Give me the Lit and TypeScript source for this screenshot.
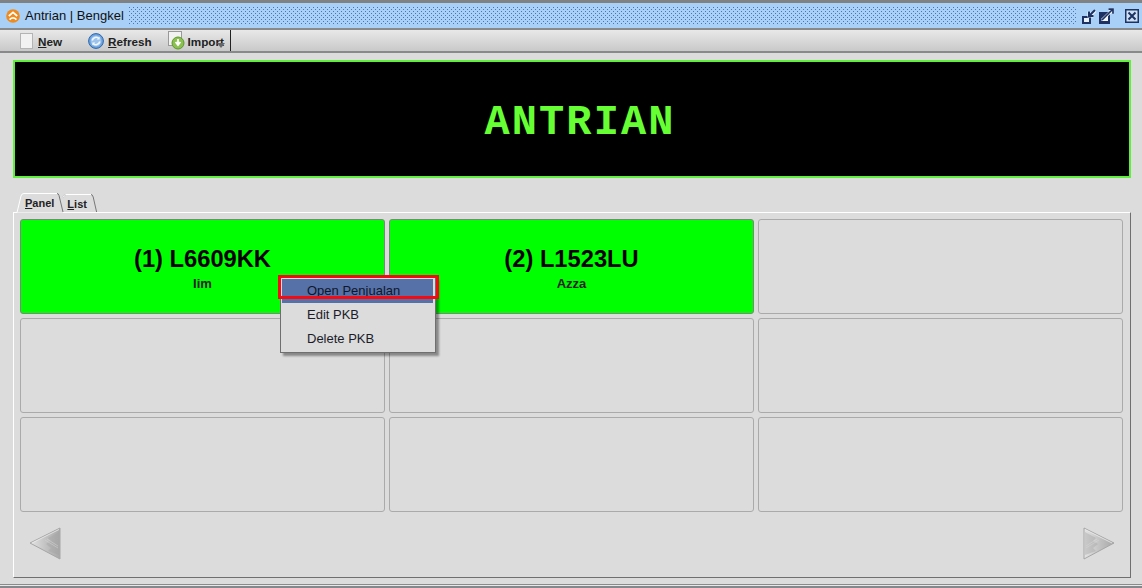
import { LitElement, html, css, svg } from "lit";
import { customElement } from "lit/decorators.js";

const u = (s: string, rest: string) => html`<span class="u">${s}</span>${rest}`;

@customElement("app-root")
export class AppRoot extends LitElement {
  static styles = css`
    :host { display: block; width: 1142px; height: 588px; position: relative; overflow: hidden; background: #dcdcdc; font-family: "Liberation Sans", Arial, sans-serif; font-size: 12px; color: #000; }
    .u { text-decoration: underline; }
    .window { display: flex; flex-direction: column; height: 588px; box-sizing: border-box; }
    .title { height: 25px; margin-top: 3px; flex: none; display: flex; align-items: center; background: #a9d0f7; box-shadow: 0 -3px 0 #7f8183; padding: 0 3px 0 6px; }
    .title .ico { width: 14px; height: 14px; flex: none; }
    .title .name { margin-left: 5px; font-size: 13px; color: #111; white-space: nowrap; width: 104px; }
    .dots { flex: 1; height: 18px; margin-top: 1px; margin-right: 6px;
      background-image: radial-gradient(circle at 0.5px 0.5px, #4f74ad 0.72px, transparent 0.72px), radial-gradient(circle at 0.5px 0.5px, #4f74ad 0.72px, transparent 0.72px);
      background-size: 4px 4px; background-position: 0 0, 2px 2px; }
    .wb { display: flex; align-items: center; flex: none; margin-top: 1px; }
    .toolbar { height: 25px; flex: none; box-sizing: border-box; display: flex; align-items: stretch; border-top: 2px solid #87898b; border-bottom: 2px solid #87898b; background: linear-gradient(#e8e8e8, #dadada 45%, #c9c9c9); }
    .tools { width: 231px; box-sizing: border-box; display: flex; align-items: center; border-right: 1px solid #222; font-weight: bold; font-size: 11.7px; color: #222; position: relative; }
    .tool { display: flex; align-items: center; white-space: nowrap; }
    .tool span.lbl { padding-top: 2px; }
    .new { margin-left: 20px; gap: 5px; }
    .refresh { margin-left: 26px; gap: 4px; }
    .import { margin-left: 16px; gap: 3px; }
    .content { flex: 1; min-height: 0; padding: 7px 11px 0 13px; display: flex; flex-direction: column; }
    .banner { height: 118px; flex: none; box-sizing: border-box; background: #000; border: 2px solid #5ff03c; display: flex; align-items: center; justify-content: center; padding: 8px 0 0 16px; color: #66ff33; font-family: "Liberation Mono", monospace; font-weight: bold; font-size: 42px; letter-spacing: 2.1px; }
    .tabs { display: flex; margin-top: 15px; height: 19px; flex: none; position: relative; z-index: 1; font-weight: bold; font-size: 11px; color: #222; }
    .shape { position: absolute; left: 0; top: 0; }
    .tab { position: relative; padding-top: 3px; line-height: 14px; }
    .tab.a { margin-left: 12px; }
    .tab.b { margin-left: 13px; padding-top: 4px; }
    .panel { height: 366px; flex: none; box-sizing: border-box; border: 1px solid #6f6f6f; border-top-color: #fff; border-left-color: #fff; padding: 6px 7px 0 6px; display: flex; flex-direction: column; }
    .grid { display: grid; grid-template-columns: repeat(3, 365px); grid-auto-rows: 95px; gap: 4px; }
    .card { box-sizing: border-box; border: 1px solid #aaa; border-radius: 3px; display: flex; flex-direction: column; align-items: center; }
    .card.on { background: #00ff00; border-color: #7a8a7a; }
    .num { font-size: 23.7px; font-weight: bold; line-height: 28px; margin-top: 25px; }
    .who { font-size: 13px; font-weight: bold; line-height: 14px; margin-top: 4px; color: #222; }
    .nav { display: flex; justify-content: space-between; margin-top: 15px; padding: 0 8px 0 9px; }
    .bottom { height: 4px; flex: none; box-sizing: border-box; border-top: 1px solid #8a8a8a; border-bottom: 2px solid #85878a; background: #e8e8e8; }
    .menu { position: absolute; left: 280px; top: 277px; width: 156px; height: 76px; box-sizing: border-box; background: #dcdcdc; border: 1px solid #6f6f6f; padding: 1px 2px 0 1px; box-shadow: 3px 3px 2px rgba(0,0,0,0.38); font-size: 13px; color: #1b1b2a; }
    .item { height: 24px; line-height: 24px; padding-left: 25px; }
    .item.sel { background: #5571a8; color: #10162a; }
    .red { position: absolute; left: 278px; top: 275px; width: 161px; height: 24px; box-sizing: border-box; border: 3px solid #f40a10; }
  `;

  arrow(left: boolean) {
    const id = left ? "gl" : "gr";
    return svg`<svg width="32" height="33" viewBox="0 0 32 33">
      <defs><linearGradient id=${id} x1=${left ? "1" : "0"} y1="0.5" x2=${left ? "0" : "1"} y2="0.5">
        <stop offset="0" stop-color="#a8a8a8"/><stop offset="0.45" stop-color="#c0c0c0"/><stop offset="1" stop-color="#e4e4e4"/></linearGradient></defs>
      <g transform=${left ? "" : "matrix(-1 0 0 1 32 0)"}>
        <polygon points="1,16 31,1 31,32" fill=${`url(#${id})`} stroke="#a6a6a6" stroke-width="1"/>
        <path d="M30 5 19 11 22 14 17 17 22 21 19 24 30 28z" fill="#a2a2a2" opacity="0.4"/>
        <path d="M16 13l13 8M18 12l11 7" stroke="#d8d8d8" stroke-width="1" opacity="0.5"/>
        <path d="M3 16 30 2.5" stroke="#ececec" stroke-width="1" opacity="0.8"/>
      </g>
    </svg>`;
  }

  render() {
    const cards = [
      ["(1) L6609KK", "Iim"], ["(2) L1523LU", "Azza"], null,
      null, null, null, null, null, null,
    ];
    return html`<div class="window">
      <div class="title">
        <svg class="ico" viewBox="0 0 14 14"><circle cx="7" cy="7" r="6.8" fill="#f08a1c"/><path d="M2.8 7 7 3.4 11.2 7M3.6 10.6Q7 7.2 10.4 10.6" fill="none" stroke="#fff" stroke-width="1.7"/></svg>
        <span class="name">Antrian | Bengkel</span>
        <div class="dots"></div>
        <div class="wb">
          <svg width="14" height="15" viewBox="0 0 14 15" style="margin-right:3px"><path d="M1 8h7v6H1z" fill="#e8f0fa" stroke="#1d3263" stroke-width="2"/><path d="M13.5 1.5 8 7M7 2.5V7h4.5" fill="none" stroke="#fff" stroke-width="3.2" opacity="0.7"/><path d="M13 1 7.5 6.5M7 2.5V7h4.5" fill="none" stroke="#1d3263" stroke-width="2"/></svg>
          <svg width="15" height="16" viewBox="0 0 15 16" style="margin-right:11px"><rect x="0" y="4" width="11" height="12" fill="#1d3263"/><path d="M2 13 9 6v7z" fill="#f2f6fb"/><path d="M3 12 14 1.5M9.5 1H14v4.5" fill="none" stroke="#fff" stroke-width="3" opacity="0.85"/><path d="M3 12 13.5 1.5M9.5 1.2H14v4.5" fill="none" stroke="#1d3263" stroke-width="1.7"/></svg>
          <svg width="14" height="14" viewBox="0 0 14 14"><rect x=".75" y=".75" width="12.5" height="12.5" fill="#cfe0f2" stroke="#1d3263" stroke-width="1.5"/><path d="M3.5 3.5l7 7M10.5 3.5l-7 7" stroke="#1d3263" stroke-width="2"/></svg>
        </div>
      </div>
      <div class="toolbar">
        <div class="tools">
          <div class="tool new">
            <svg width="13" height="16" viewBox="0 0 13 16"><rect x=".5" y=".5" width="12" height="15" fill="#f2f2f2" stroke="#b4b4b4"/></svg>
            <span class="lbl">${u("N", "ew")}</span>
          </div>
          <div class="tool refresh">
            <svg width="16" height="16" viewBox="0 0 16 16"><circle cx="8" cy="8" r="7.4" fill="#6ea5e0" stroke="#2e66ad"/><circle cx="8" cy="8" r="5.4" fill="#9cc3ec"/><path d="M4.2 7.5a4 4 0 0 1 6.8-2M11.8 8.5a4 4 0 0 1-6.8 2" fill="none" stroke="#f2f7fd" stroke-width="1.6"/><path d="M11.6 3.4v3h-3M4.4 12.6v-3h3" fill="#f2f7fd"/></svg>
            <span class="lbl">${u("R", "efresh")}</span>
          </div>
          <div class="tool import">
            <svg width="17" height="19" viewBox="0 0 17 19"><rect x=".5" y=".5" width="13" height="14" fill="#f2f2f2" stroke="#999"/><circle cx="10" cy="12" r="6" fill="#8cc152" stroke="#5c9a2a"/><path d="M10 8v5M7.6 11l2.4 3 2.4-3" fill="none" stroke="#fff" stroke-width="1.8"/></svg>
            <span class="lbl">Import</span>
            <svg width="8" height="5" viewBox="0 0 8 5" style="margin:10px 0 0 -10px"><path d="M0 0h8L4 5z" fill="#666"/></svg>
          </div>
        </div>
      </div>
      <div class="content">
        <div class="banner">ANTRIAN</div>
        <div class="tabs">
          <svg class="shape" width="100" height="20" viewBox="0 0 100 20">
            <path d="M49.5 5.5 Q50 1.5 53 1.5 H78 Q79.5 1.5 80.2 4 L84 19 H49.5 Z" fill="#dcdcdc" stroke="none"/>
            <path d="M49.6 5 Q50.5 1.5 53 1.5 H78 Q79.5 1.5 80.2 4 L83.6 19" fill="none" stroke="#777" stroke-width="1"/>
            <path d="M49.6 5 Q50.5 1.5 53 1.5 H78" fill="none" stroke="#fff" stroke-width="1"/>
            <path d="M4 19.5 L8 3 Q8.5 0.5 11 0.5 H44 Q45.5 0.5 46 2.5 L50 19.5 Z" fill="#dcdcdc" stroke="none"/>
            <path d="M0 19.5 H4 L8 3 Q8.5 0.5 11 0.5 H44" fill="none" stroke="#fff" stroke-width="1"/>
            <path d="M44 0.5 Q45.5 0.5 46 2.5 L50 19" fill="none" stroke="#777" stroke-width="1"/>
          </svg>
          <div class="tab a">${u("P", "anel")}</div>
          <div class="tab b">${u("L", "ist")}</div>
        </div>
        <div class="panel">
          <div class="grid">
            ${cards.map((c) => c
              ? html`<div class="card on"><div class="num">${c[0]}</div><div class="who">${c[1]}</div></div>`
              : html`<div class="card"></div>`)}
          </div>
          <div class="nav">${this.arrow(true)}${this.arrow(false)}</div>
        </div>
      </div>
      <div class="bottom"></div>
    </div>
    <div class="menu">
      <div class="item sel">Open Penjualan</div>
      <div class="item">Edit PKB</div>
      <div class="item">Delete PKB</div>
    </div>
    <div class="red"></div>`;
  }
}
